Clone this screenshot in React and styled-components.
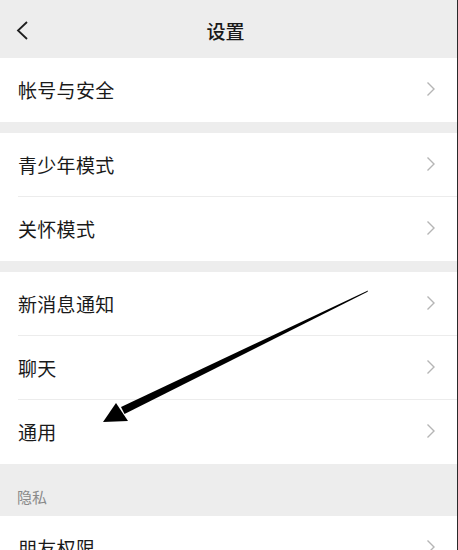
import React from "react";
import styled, { createGlobalStyle } from "styled-components";

const Global = createGlobalStyle`
  html, body { margin: 0; padding: 0; background: #ededed; }
  body { font-family: "Noto Sans CJK SC", "Noto Sans", sans-serif; }
`;

const Page = styled.div`
  position: relative;
  width: 458px;
  height: 550px;
  overflow: hidden;
  background: #ededed;
  box-sizing: border-box;
  border-right: 1px solid #2a2a2a;
`;

const Header = styled.div`
  height: 58px;
  display: grid;
  grid-template-columns: 60px 1fr 66px;
  align-items: center;
  background: #ededed;
`;

const Back = styled.div`
  display: flex;
  align-items: center;
  padding-left: 16px;
  padding-top: 3px;
`;

const Title = styled.div`
  text-align: center;
  font-size: 19px;
  font-weight: 500;
  color: #191919;
  padding-top: 2px;
`;

const Group = styled.div`
  background: #fff;
  margin-bottom: ${(p) => p.$gap}px;
`;

const Row = styled.div`
  height: 64px;
  display: flex;
  align-items: center;
  justify-content: space-between;
  padding: 0 21px 2px 18px;
  position: relative;
  box-sizing: border-box;
  &:not(:last-child)::after {
    content: "";
    position: absolute;
    left: 18px;
    right: 0;
    bottom: 0;
    height: 1px;
    background: #ececec;
  }
`;

const Label = styled.span`
  font-size: 19px;
  color: #1a1a1a;
  letter-spacing: 0.3px;
`;

const SectionLabel = styled.div`
  height: 52px;
  display: flex;
  align-items: flex-end;
  padding: 0 0 9px 17px;
  box-sizing: border-box;
  font-size: 15px;
  color: #8a8a8a;
`;

const ArrowLayer = styled.svg`
  position: absolute;
  left: 0;
  top: 0;
  pointer-events: none;
`;

const Chevron = () => (
  <svg width="10" height="16" viewBox="0 0 10 16">
    <path d="M1.5 1.5 L8 8 L1.5 14.5" fill="none" stroke="#b5b5b5" strokeWidth="1.4" />
  </svg>
);

const BackIcon = () => (
  <svg width="13" height="19" viewBox="0 0 13 19">
    <path d="M11 1 L2 9.5 L11 18" fill="none" stroke="#1e1e1e" strokeWidth="1.8" />
  </svg>
);

const Item = ({ children }) => (
  <Row>
    <Label>{children}</Label>
    <Chevron />
  </Row>
);

export default function App() {
  return (
    <>
      <Global />
      <Page>
        <Header>
          <Back>
            <BackIcon />
          </Back>
          <Title>设置</Title>
          <div />
        </Header>
        <Group $gap={11}>
          <Item>帐号与安全</Item>
        </Group>
        <Group $gap={11}>
          <Item>青少年模式</Item>
          <Item>关怀模式</Item>
        </Group>
        <Group $gap={0}>
          <Item>新消息通知</Item>
          <Item>聊天</Item>
          <Item>通用</Item>
        </Group>
        <SectionLabel>隐私</SectionLabel>
        <Group $gap={0}>
          <Item>朋友权限</Item>
        </Group>
        <ArrowLayer width="458" height="550" viewBox="0 0 458 550">
          <polygon points="368,290.5 367.6,291.8 124.5,414 121,407" fill="#000" />
          <polygon points="103,422 116,403 128,421" fill="#000" />
        </ArrowLayer>
      </Page>
    </>
  );
}
